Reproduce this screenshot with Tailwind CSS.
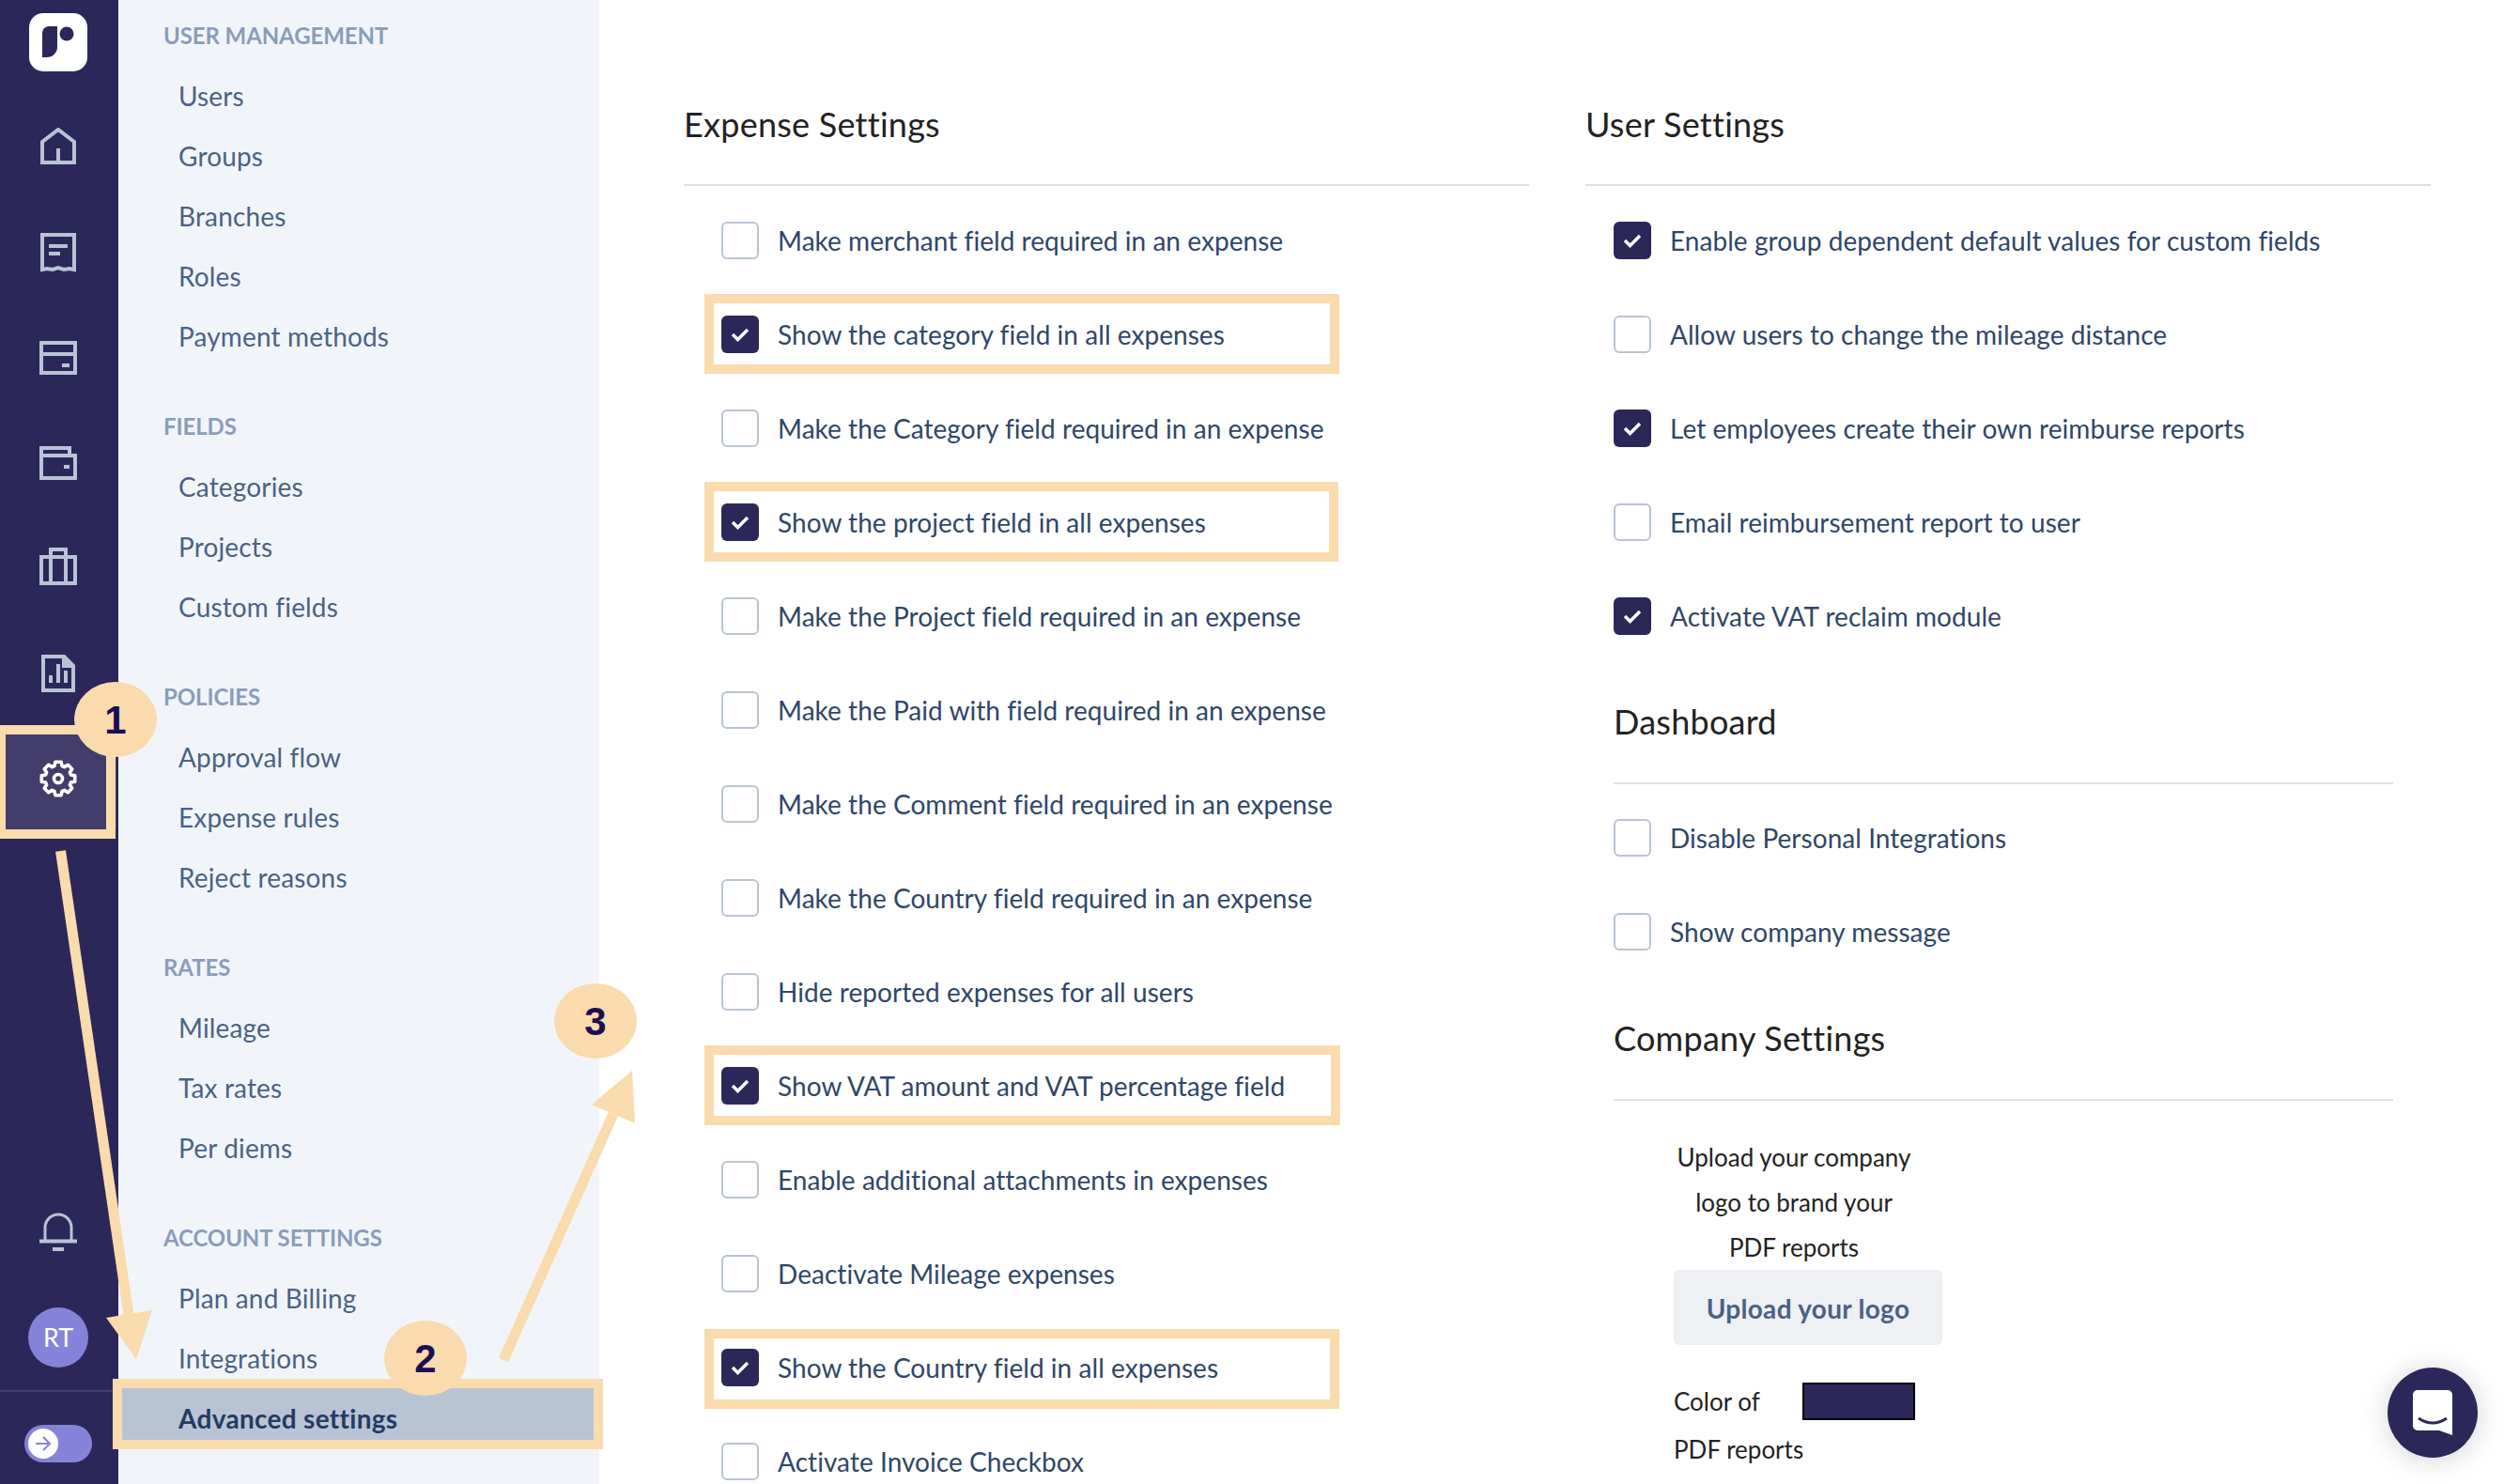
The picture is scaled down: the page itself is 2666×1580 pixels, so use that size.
<!DOCTYPE html>
<html lang="en">
<head>
    <meta charset="UTF-8">
    <title>Advanced settings</title>
    <script src="https://cdn.jsdelivr.net/npm/@tailwindcss/browser@4"></script>
</head>
<body class="bg-white font-['Lato',sans-serif]">
<div class="relative flex w-[2666px] h-[1580px] overflow-hidden [font-variant-ligatures:none]">

    <!-- icon rail -->
    <nav class="w-[126px] shrink-0 bg-[#2c2759] pr-[2px] flex flex-col items-center">
        <div class="mt-[14px] w-[62px] h-[62px] bg-white rounded-[15px] flex items-center justify-center">
            <svg width="34" height="34" viewBox="0 0 34 34" fill="#2c2759"><path d="M0 7a7 7 0 0 1 7-7h9v22a11 11 0 0 1-11 11H0z"/><circle cx="26" cy="8" r="7.5"/></svg>
        </div>
        <div class="mt-[47px] h-[66px] w-full flex items-center justify-center">
            <svg width="38" height="40" viewBox="0 0 38 40" fill="none" stroke="#b8c4d4" stroke-width="4"><path d="M2 37V15L19 2l17 13v22z"/><path d="M19 22v15"/></svg>
        </div>
        <div class="mt-[47px] h-[66px] w-full flex items-center justify-center">
            <svg width="38" height="42" viewBox="0 0 38 42" fill="none" stroke="#b8c4d4" stroke-width="4"><path d="M2 39V2h34v37l-5-1-6 1-6-2-6 2-6-1z"/><path d="M9 14h20M9 22h12"/></svg>
        </div>
        <div class="mt-[46px] h-[66px] w-full flex items-center justify-center">
            <svg width="40" height="36" viewBox="0 0 40 36" fill="none" stroke="#b8c4d4" stroke-width="4"><path d="M2 2h36v32H2zM2 14h36"/><path d="M24 26h8"/></svg>
        </div>
        <div class="mt-[46px] h-[66px] w-full flex items-center justify-center">
            <svg width="40" height="36" viewBox="0 0 40 36" fill="none" stroke="#b8c4d4" stroke-width="4"><path d="M2 10h36v24H2zM2 10V2h30v8"/><path d="M26 22h6"/></svg>
        </div>
        <div class="mt-[44px] h-[66px] w-full flex items-center justify-center">
            <svg width="40" height="40" viewBox="0 0 40 40" fill="none" stroke="#b8c4d4" stroke-width="4"><path d="M2 10h36v28H2zM12 10V2h16v8M12 10v28M28 10v28"/></svg>
        </div>
        <div class="mt-[48px] h-[66px] w-full flex items-center justify-center">
            <svg width="36" height="40" viewBox="0 0 36 40" fill="none" stroke="#b8c4d4" stroke-width="4"><path d="M2 2h22l10 10v26H2z"/><path d="M24 2v10h10z" fill="#b8c4d4"/><path d="M10 30v-8M18 30V10M26 30V17"/></svg>
        </div>
        <div class="mt-[26px] h-[107px] w-full bg-[#433d6b] pb-[1px] flex items-center justify-center">
            <svg width="40" height="40" viewBox="-20 -20 40 40" fill="none" stroke="#fff" stroke-width="3.600" stroke-linejoin="round"><circle r="4.500"/><path d="M-4.090-13.390L-3.130-17.730H3.130L4.090-13.390L6.580-12.360L10.320-14.750L14.750-10.320L12.360-6.580L13.390-4.090L17.730-3.130V3.130L13.390 4.090L12.360 6.580L14.750 10.320L10.320 14.750L6.580 12.360L4.090 13.390L3.130 17.730H-3.130L-4.090 13.390L-6.580 12.360L-10.320 14.750L-14.750 10.320L-12.360 6.580L-13.390 4.090L-17.730 3.130V-3.130L-13.390-4.090L-12.360-6.580L-14.750-10.320L-10.320-14.750L-6.580-12.360z"/></svg>
        </div>
        <div class="mt-auto flex flex-col items-center w-full">
            <svg width="40" height="42" viewBox="0 0 40 42" fill="none" stroke="#b8c4d4" stroke-width="3"><path d="M6 30V17a14 14 0 0 1 28 0v13"/><path d="M0 31.500h40" stroke-width="4"/><path d="M14 40h12" stroke-width="4"/></svg>
            <div class="mt-[60px] w-[64px] h-[64px] rounded-full bg-[#8583d9] text-white text-[27px] flex items-center justify-center">RT</div>
            <div class="mt-[24px] w-[126px] self-start h-[2px] bg-[#433d6b]"></div>
            <div class="mt-[35px] mb-[23px] w-[72px] h-[40px] rounded-full bg-[#8583d9] pl-[4px] flex items-center">
                <div class="w-[32px] h-[32px] rounded-full bg-white flex items-center justify-center">
                    <svg width="18" height="18" viewBox="0 0 18 18" fill="none" stroke="#8583d9" stroke-width="2"><path d="M1 9h15M9 2l7 7-7 7"/></svg>
                </div>
            </div>
        </div>
    </nav>

    <!-- settings menu -->
    <aside class="w-[512px] shrink-0 bg-[#f1f5fa] pt-[20px] pl-[48px] text-[#4a6285] text-[28px] tracking-[0.15px]">
        <h4 class="h-[36px] leading-[36px] text-[24px] font-bold text-[#8a9dbb] tracking-[-0.1px]">USER MANAGEMENT</h4>
        <ul class="pl-[16px] mt-[14px]">
            <li class="h-[64px] leading-[64px]">Users</li>
            <li class="h-[64px] leading-[64px]">Groups</li>
            <li class="h-[64px] leading-[64px]">Branches</li>
            <li class="h-[64px] leading-[64px]">Roles</li>
            <li class="h-[64px] leading-[64px]">Payment methods</li>
        </ul>
        <h4 class="mt-[46px] h-[36px] leading-[36px] text-[24px] font-bold text-[#8a9dbb] tracking-[-0.1px]">FIELDS</h4>
        <ul class="pl-[16px] mt-[14px]">
            <li class="h-[64px] leading-[64px]">Categories</li>
            <li class="h-[64px] leading-[64px]">Projects</li>
            <li class="h-[64px] leading-[64px]">Custom fields</li>
        </ul>
        <h4 class="mt-[46px] h-[36px] leading-[36px] text-[24px] font-bold text-[#8a9dbb] tracking-[-0.1px]">POLICIES</h4>
        <ul class="pl-[16px] mt-[14px]">
            <li class="h-[64px] leading-[64px]">Approval flow</li>
            <li class="h-[64px] leading-[64px]">Expense rules</li>
            <li class="h-[64px] leading-[64px]">Reject reasons</li>
        </ul>
        <h4 class="mt-[46px] h-[36px] leading-[36px] text-[24px] font-bold text-[#8a9dbb] tracking-[-0.1px]">RATES</h4>
        <ul class="pl-[16px] mt-[14px]">
            <li class="h-[64px] leading-[64px]">Mileage</li>
            <li class="h-[64px] leading-[64px]">Tax rates</li>
            <li class="h-[64px] leading-[64px]">Per diems</li>
        </ul>
        <h4 class="mt-[46px] h-[36px] leading-[36px] text-[24px] font-bold text-[#8a9dbb] tracking-[-0.1px]">ACCOUNT SETTINGS</h4>
        <ul class="pl-[16px] mt-[14px]">
            <li class="h-[64px] leading-[64px]">Plan and Billing</li>
            <li class="h-[64px] leading-[64px]">Integrations</li>
            <li class="h-[64px] leading-[64px] -ml-[61px] pl-[61px] w-[506px] bg-[#b8c4d4] font-bold tracking-[0.3px] text-[#243b63]">Advanced settings</li>
        </ul>
    </aside>

    <!-- main -->
    <main class="flex-1 flex pl-[90px] gap-[60px] text-[#2f4668] text-[28px] tracking-[0.05px]">
        <section class="w-[900px]">
            <h2 class="mt-[108px] h-[48px] leading-[48px] text-[36px] tracking-[0.25px] text-[#222]">Expense Settings</h2>
            <div class="mt-[40px] h-[2px] bg-[#e0e0e0]"></div>
            <div class="mt-[8px] pl-[40px]">
                <label class="h-[100px] flex items-center gap-[20px]"><span class="w-[40px] h-[40px] rounded-[6px] border-2 border-[#b8c4d4] bg-white"></span>Make merchant field required in an expense</label>
                <label class="h-[100px] flex items-center gap-[20px]"><span class="w-[40px] h-[40px] rounded-[6px] bg-[#2c2759] flex items-center justify-center"><svg width="20" height="16" viewBox="0 0 20 16" fill="none" stroke="#fff" stroke-width="3.500"><path d="M2 8l5.500 5.500L18 3"/></svg></span>Show the category field in all expenses</label>
                <label class="h-[100px] flex items-center gap-[20px]"><span class="w-[40px] h-[40px] rounded-[6px] border-2 border-[#b8c4d4] bg-white"></span>Make the Category field required in an expense</label>
                <label class="h-[100px] flex items-center gap-[20px]"><span class="w-[40px] h-[40px] rounded-[6px] bg-[#2c2759] flex items-center justify-center"><svg width="20" height="16" viewBox="0 0 20 16" fill="none" stroke="#fff" stroke-width="3.500"><path d="M2 8l5.500 5.500L18 3"/></svg></span>Show the project field in all expenses</label>
                <label class="h-[100px] flex items-center gap-[20px]"><span class="w-[40px] h-[40px] rounded-[6px] border-2 border-[#b8c4d4] bg-white"></span>Make the Project field required in an expense</label>
                <label class="h-[100px] flex items-center gap-[20px]"><span class="w-[40px] h-[40px] rounded-[6px] border-2 border-[#b8c4d4] bg-white"></span>Make the Paid with field required in an expense</label>
                <label class="h-[100px] flex items-center gap-[20px]"><span class="w-[40px] h-[40px] rounded-[6px] border-2 border-[#b8c4d4] bg-white"></span>Make the Comment field required in an expense</label>
                <label class="h-[100px] flex items-center gap-[20px]"><span class="w-[40px] h-[40px] rounded-[6px] border-2 border-[#b8c4d4] bg-white"></span>Make the Country field required in an expense</label>
                <label class="h-[100px] flex items-center gap-[20px]"><span class="w-[40px] h-[40px] rounded-[6px] border-2 border-[#b8c4d4] bg-white"></span>Hide reported expenses for all users</label>
                <label class="h-[100px] flex items-center gap-[20px]"><span class="w-[40px] h-[40px] rounded-[6px] bg-[#2c2759] flex items-center justify-center"><svg width="20" height="16" viewBox="0 0 20 16" fill="none" stroke="#fff" stroke-width="3.500"><path d="M2 8l5.500 5.500L18 3"/></svg></span>Show VAT amount and VAT percentage field</label>
                <label class="h-[100px] flex items-center gap-[20px]"><span class="w-[40px] h-[40px] rounded-[6px] border-2 border-[#b8c4d4] bg-white"></span>Enable additional attachments in expenses</label>
                <label class="h-[100px] flex items-center gap-[20px]"><span class="w-[40px] h-[40px] rounded-[6px] border-2 border-[#b8c4d4] bg-white"></span>Deactivate Mileage expenses</label>
                <label class="h-[100px] flex items-center gap-[20px]"><span class="w-[40px] h-[40px] rounded-[6px] bg-[#2c2759] flex items-center justify-center"><svg width="20" height="16" viewBox="0 0 20 16" fill="none" stroke="#fff" stroke-width="3.500"><path d="M2 8l5.500 5.500L18 3"/></svg></span>Show the Country field in all expenses</label>
                <label class="h-[100px] flex items-center gap-[20px]"><span class="w-[40px] h-[40px] rounded-[6px] border-2 border-[#b8c4d4] bg-white"></span>Activate Invoice Checkbox</label>
            </div>
        </section>

        <section class="w-[900px]">
            <h2 class="mt-[108px] h-[48px] leading-[48px] text-[36px] tracking-[0.25px] text-[#222]">User Settings</h2>
            <div class="mt-[40px] h-[2px] bg-[#e0e0e0]"></div>
            <div class="mt-[8px] pl-[30px] pr-[40px]">
                <label class="h-[100px] flex items-center gap-[20px]"><span class="w-[40px] h-[40px] rounded-[6px] bg-[#2c2759] flex items-center justify-center"><svg width="20" height="16" viewBox="0 0 20 16" fill="none" stroke="#fff" stroke-width="3.500"><path d="M2 8l5.500 5.500L18 3"/></svg></span>Enable group dependent default values for custom fields</label>
                <label class="h-[100px] flex items-center gap-[20px]"><span class="w-[40px] h-[40px] rounded-[6px] border-2 border-[#b8c4d4] bg-white"></span>Allow users to change the mileage distance</label>
                <label class="h-[100px] flex items-center gap-[20px]"><span class="w-[40px] h-[40px] rounded-[6px] bg-[#2c2759] flex items-center justify-center"><svg width="20" height="16" viewBox="0 0 20 16" fill="none" stroke="#fff" stroke-width="3.500"><path d="M2 8l5.500 5.500L18 3"/></svg></span>Let employees create their own reimburse reports</label>
                <label class="h-[100px] flex items-center gap-[20px]"><span class="w-[40px] h-[40px] rounded-[6px] border-2 border-[#b8c4d4] bg-white"></span>Email reimbursement report to user</label>
                <label class="h-[100px] flex items-center gap-[20px]"><span class="w-[40px] h-[40px] rounded-[6px] bg-[#2c2759] flex items-center justify-center"><svg width="20" height="16" viewBox="0 0 20 16" fill="none" stroke="#fff" stroke-width="3.500"><path d="M2 8l5.500 5.500L18 3"/></svg></span>Activate VAT reclaim module</label>

                <h2 class="mt-[38px] h-[48px] leading-[48px] text-[36px] tracking-[0.25px] text-[#222]">Dashboard</h2>
                <div class="mt-[41px] h-[2px] bg-[#e0e0e0]"></div>
                <div class="mt-[7px]">
                    <label class="h-[100px] flex items-center gap-[20px]"><span class="w-[40px] h-[40px] rounded-[6px] border-2 border-[#b8c4d4] bg-white"></span>Disable Personal Integrations</label>
                    <label class="h-[100px] flex items-center gap-[20px]"><span class="w-[40px] h-[40px] rounded-[6px] border-2 border-[#b8c4d4] bg-white"></span>Show company message</label>
                </div>

                <h2 class="mt-[39px] h-[48px] leading-[48px] text-[36px] tracking-[0.25px] text-[#222]">Company Settings</h2>
                <div class="mt-[41px] h-[2px] bg-[#e0e0e0]"></div>

                <div class="pl-[64px] mt-[36px] text-[26px] tracking-normal text-[#222]">
                    <p class="w-[256px] text-center leading-[48px]">Upload your company<br>logo to brand your<br>PDF reports</p>
                    <button class="w-[286px] h-[80px] rounded-[6px] bg-[#eef0f4] text-[28px] pt-[2px] font-bold tracking-[0.3px] text-[#4a6285]">Upload your logo</button>
                    <div class="mt-[40px] flex items-center h-[40px]">
                        <span class="w-[137px] leading-[48px]">Color of</span>
                        <span class="w-[120px] h-[40px] border-2 border-black bg-[#2c2759]"></span>
                    </div>
                    <p class="mt-[7px] leading-[48px]">PDF reports</p>
                </div>
            </div>
        </section>
    </main>

    <!-- chat launcher -->
    <div class="absolute left-[2542px] top-[1456px] w-[96px] h-[96px] rounded-full bg-[#2c2759] shadow-[0_2px_30px_rgba(0,0,0,0.18)] flex items-center justify-center">
        <svg width="42" height="48" viewBox="0 0 42 48" fill="#fff"><path d="M5 0h32a5 5 0 0 1 5 5v43l-14-5H5a5 5 0 0 1-5-5V5a5 5 0 0 1 5-5z"/><path d="M6 30Q21 40 36 30" fill="none" stroke="#2c2759" stroke-width="3"/></svg>
    </div>

    <!-- annotation frames -->
    <div class="absolute left-0 top-[772px] w-[123px] h-[121px] border-[10px] border-l-[6px] border-[#fadbad]"></div>
    <div class="absolute left-[120px] top-[1468px] w-[522px] h-[75px] border-[10px] border-[#fadbad]"></div>
    <div class="absolute left-[750px] top-[313px] w-[676px] h-[85px] border-[10px] border-[#fadbad]"></div>
    <div class="absolute left-[750px] top-[513px] w-[675px] h-[85px] border-[10px] border-[#fadbad]"></div>
    <div class="absolute left-[750px] top-[1113px] w-[677px] h-[85px] border-[10px] border-[#fadbad]"></div>
    <div class="absolute left-[750px] top-[1415px] w-[676px] h-[85px] border-[10px] border-[#fadbad]"></div>

    <!-- annotation arrows -->
    <svg class="absolute left-0 top-0" width="2666" height="1580" viewBox="0 0 2666 1580" fill="#fadbad">
        <path d="M64.500 906L137 1400" stroke="#fadbad" stroke-width="11" fill="none"/>
        <path d="M113 1403L162 1395L145 1447z"/>
        <path d="M536 1448L653 1186" stroke="#fadbad" stroke-width="11" fill="none"/>
        <path d="M630 1176L673 1140L676 1196z"/>
    </svg>

    <!-- annotation badges -->
    <div class="absolute left-[79px] top-[726px] w-[88px] h-[80px] rounded-[50%] bg-[#fadbad] text-[#1d0d55] text-[42px] font-['Liberation_Sans',sans-serif] font-bold flex items-center justify-center">1</div>
    <div class="absolute left-[409px] top-[1406px] w-[88px] h-[80px] rounded-[50%] bg-[#fadbad] text-[#1d0d55] text-[42px] font-['Liberation_Sans',sans-serif] font-bold flex items-center justify-center">2</div>
    <div class="absolute left-[590px] top-[1047px] w-[88px] h-[80px] rounded-[50%] bg-[#fadbad] text-[#1d0d55] text-[42px] font-['Liberation_Sans',sans-serif] font-bold flex items-center justify-center">3</div>
</div>
</body>
</html>
